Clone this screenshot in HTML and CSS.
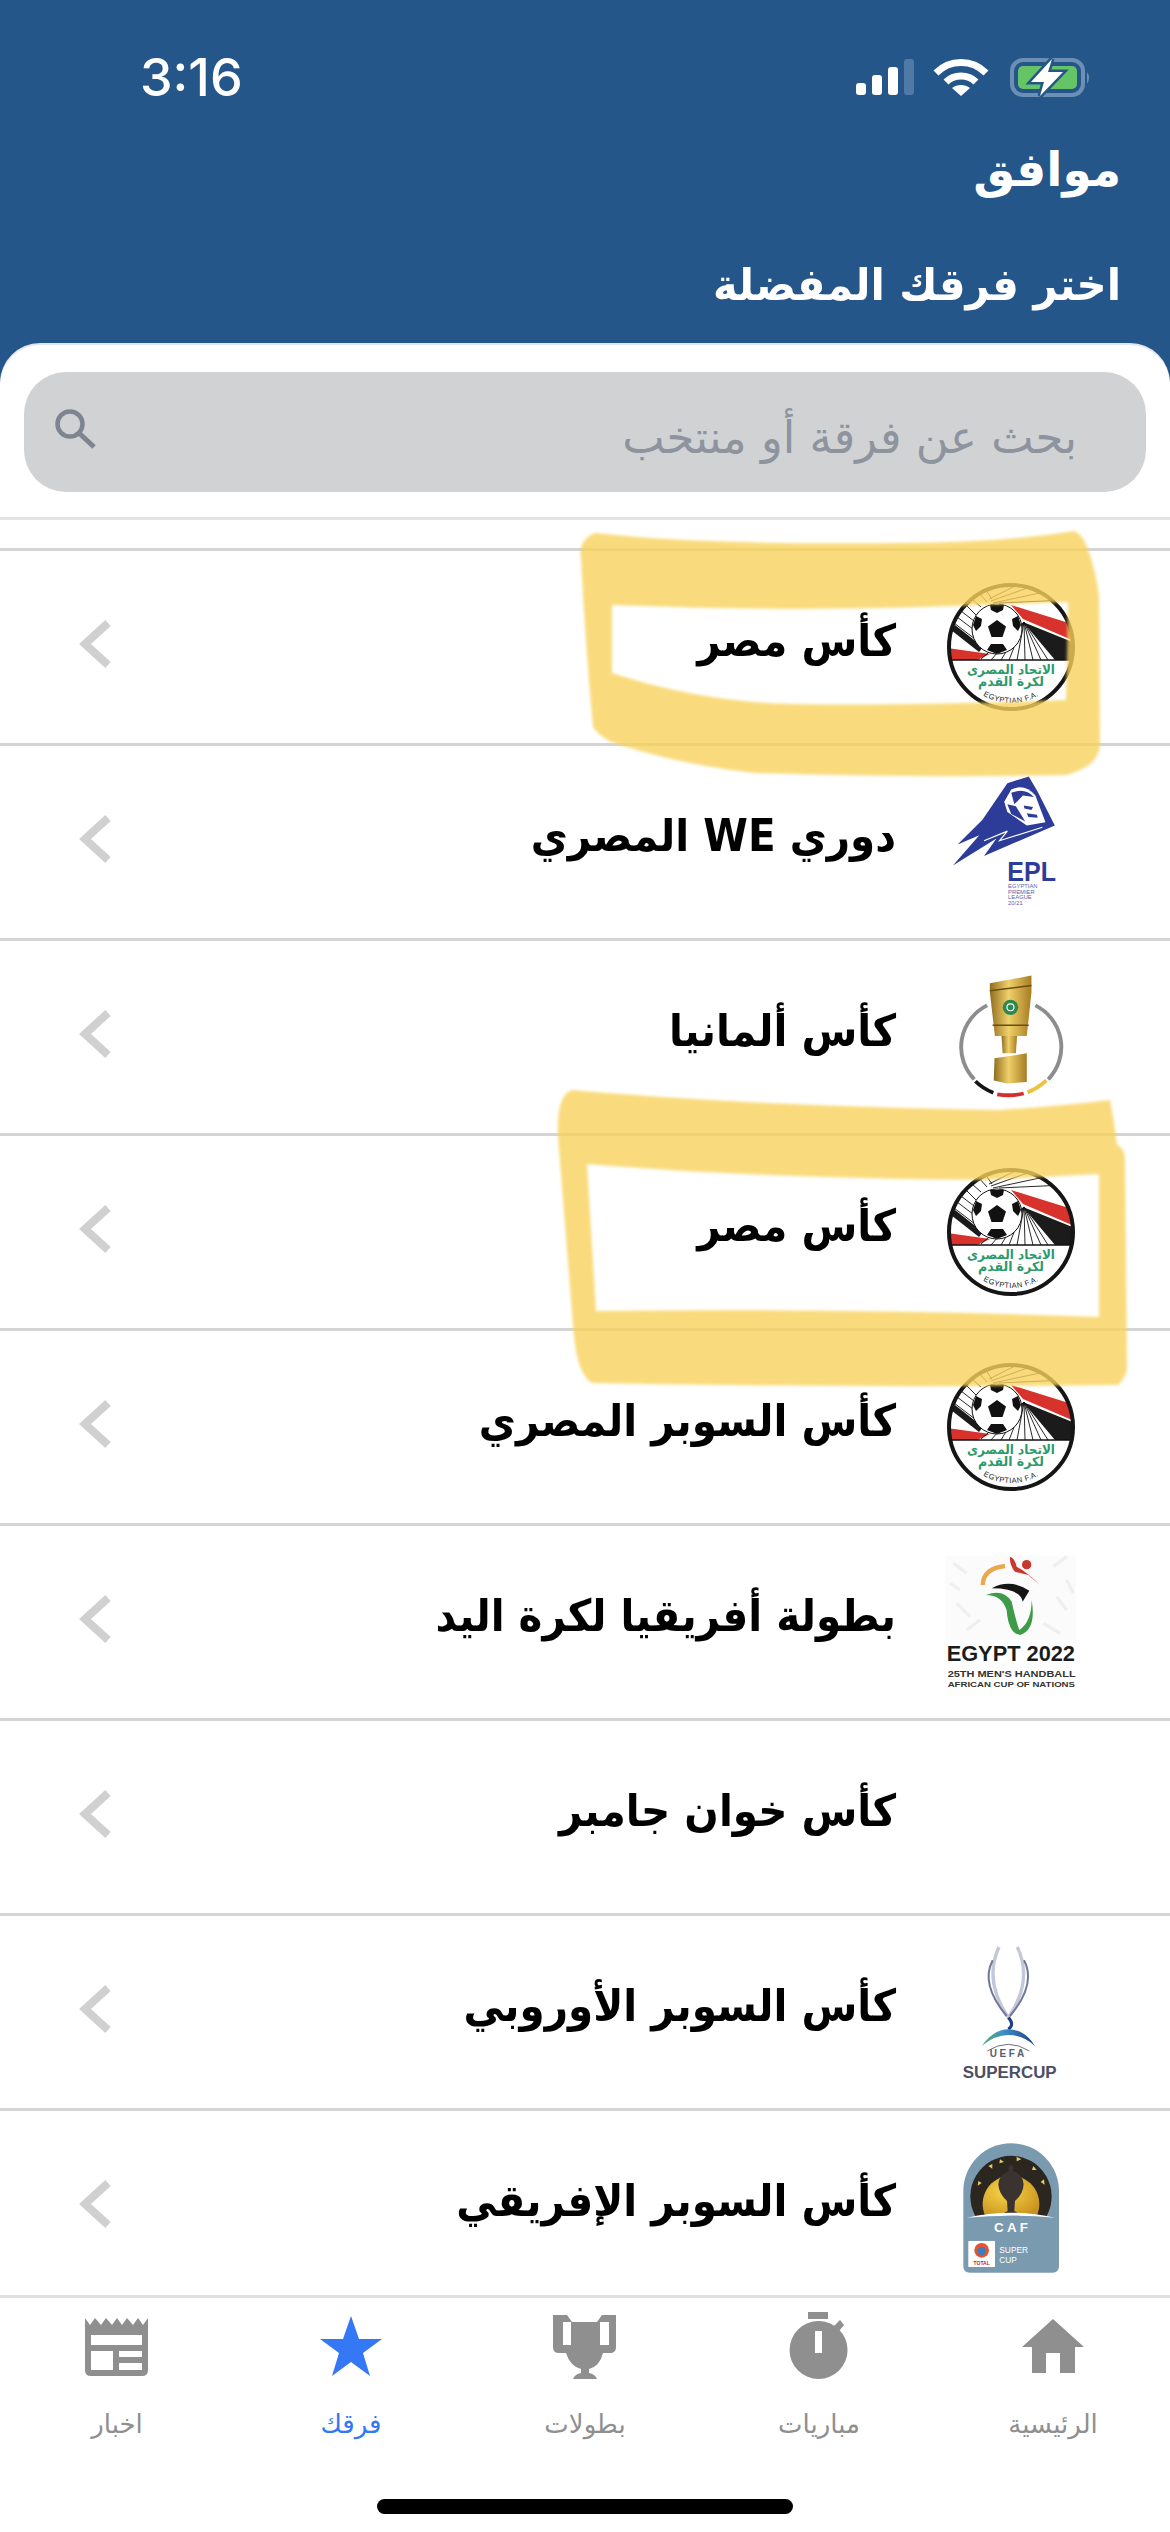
FILE: index.html
```html
<!DOCTYPE html>
<html lang="ar" dir="rtl">
<head>
  <meta charset="UTF-8">
  <title>اختر فرقك المفضلة</title>
  <link rel="stylesheet" href="styles.css">
</head>
<body>
  <!-- Shared drawings: Egyptian FA crest and the row chevron -->
  <svg class="defs" width="0" height="0">
    <defs>
      <clipPath id="crestClip"><circle cx="64" cy="64" r="62"/></clipPath>
      <linearGradient id="gold" x1="0" x2="1" y1="0" y2="0">
        <stop offset="0" stop-color="#8f6c1e"/>
        <stop offset=".45" stop-color="#f0d06a"/>
        <stop offset="1" stop-color="#a67c22"/>
      </linearGradient>
      <linearGradient id="uefaBlue" x1="0" x2="1" y1="0" y2="0">
        <stop offset="0" stop-color="#5fae6e"/>
        <stop offset=".4" stop-color="#3f8fc8"/>
        <stop offset="1" stop-color="#1d3f86"/>
      </linearGradient>
      <radialGradient id="ballGold" cx=".4" cy=".4" r=".7">
        <stop offset="0" stop-color="#f8d648"/>
        <stop offset="1" stop-color="#c9921e"/>
      </radialGradient>
      <symbol id="crest" viewBox="0 0 140 160">
        <g transform="translate(6 16)">
          <circle cx="64" cy="64" r="62" fill="#fff"/>
          <g clip-path="url(#crestClip)">
            <path d="M64 22L125 41V57L76 36Z" fill="#d8322c"/>
            <path d="M76 39L128 60V77H108Z" fill="#1b1b1b"/>
            <path d="M0 65L43 71L30 77H0Z" fill="#d8322c"/>
            <path d="M4 47L8 42L36 64L32 69Z" fill="#1b1b1b"/>
            <path d="M7 40L28 56M10 34L26 46M14 28L27 38M19 22L29 32M25 16L34 24M32 10L40 19M38 6L45 16M42 16L70 2M44 18L86 3M46 20L102 8M52 20L118 17" stroke="#111" stroke-width=".9" fill="none"/>
            <path d="M77 39L34 76M77 39L44 77M77 39L54 77M77 39L62 77M77 39L70 77M77 39L78 77M77 39L86 77M77 39L94 77M77 39L101 77" stroke="#111" stroke-width=".9" fill="none"/>
            <circle cx="50" cy="46" r="25" fill="#fff" stroke="#111" stroke-width="1"/>
            <path d="M50 37L59 43.500L55.500 54H44.500L41 43.500Z" fill="#111"/>
            <path d="M43 22L57 22L56 27L50 30L44 27ZM26 42L29 33L35 36L34 43L29 48ZM74 42L71 33L65 36L66 43L71 48ZM40 67L44 61L56 61L60 67L50 71Z" fill="#111"/>
            <path d="M0 77H128" stroke="#111" stroke-width="1.6"/>
          </g>
          <text class="crest-ar" x="64" y="91" text-anchor="middle" textLength="88" lengthAdjust="spacingAndGlyphs">الاتحاد المصرى</text>
          <text class="crest-ar" x="64" y="103" text-anchor="middle" textLength="66" lengthAdjust="spacingAndGlyphs">لكرة القدم</text>
          <path id="crestArc" d="M20 98.600A56 56 0 0 0 108 98.600" fill="none"/>
          <text class="crest-en" direction="ltr"><textPath href="#crestArc" startOffset="50%" text-anchor="middle">EGYPTIAN F.A.</textPath></text>
          <circle cx="64" cy="64" r="62" fill="none" stroke="#151515" stroke-width="4"/>
        </g>
      </symbol>
      <symbol id="chevron" viewBox="0 0 40 52">
        <path d="M31 5L8 26L31 47" fill="none" stroke="#d0d0d0" stroke-width="8"/>
      </symbol>
    </defs>
  </svg>

  <header class="top">
    <div class="status">
      <span class="time">3:16</span>
      <svg class="status-icons" width="235" height="40" viewBox="0 0 235 40">
        <rect x="0" y="25" width="10" height="12" rx="3" fill="#fff"/>
        <rect x="16" y="17" width="10" height="20" rx="3" fill="#fff"/>
        <rect x="32" y="9" width="10" height="28" rx="3" fill="#fff"/>
        <rect x="48" y="1" width="10" height="36" rx="3" fill="#4f7aa6"/>
        <path d="M80 15C94 1 116 1 130 15" fill="none" stroke="#fff" stroke-width="7"/>
        <path d="M90 24C98 16 112 16 120 24" fill="none" stroke="#fff" stroke-width="7"/>
        <path d="M105 38L96 30C101 26 109 26 114 30Z" fill="#fff"/>
        <rect x="156" y="2" width="71" height="35" rx="11" fill="none" stroke="#6d8fb3" stroke-width="4"/>
        <rect x="162" y="8" width="59" height="23" rx="5" fill="#65c466"/>
        <path d="M231 14Q235 19 231 26Z" fill="#6d8fb3"/>
        <path class="bolt" d="M196 1L175 24H188L184 38L207 14H192Z"/>
      </svg>
    </div>
    <div class="ok">موافق</div>
    <h1 class="title">اختر فرقك المفضلة</h1>
  </header>

  <main class="sheet">
    <div class="search">
      <span class="search-text">بحث عن فرقة أو منتخب</span>
      <svg class="search-icon" width="44" height="44" viewBox="0 0 44 44">
        <circle cx="17" cy="17" r="12.5" fill="none" stroke="#7d8690" stroke-width="4.5"/>
        <path d="M26 26L41 40" stroke="#7d8690" stroke-width="5"/>
      </svg>
    </div>

    <ul class="list">
      <li class="row row-cut"></li>

      <li class="row">
        <svg class="logo"><use href="#crest"/></svg>
        <span class="name">كأس مصر</span>
        <svg class="chevron"><use href="#chevron"/></svg>
      </li>

      <li class="row">
        <svg class="logo" viewBox="0 0 140 160">
          <g transform="translate(-381 -243) scale(.389 .383)">
            <path d="M1150 690L1205 672L1228 712L1272 800L1090 880L1122 834L1010 905L1078 826L1022 850L1086 785Z" fill="#2d3c99"/>
            <path d="M1142 738L1160 706Q1195 690 1222 722L1248 792L1200 800L1150 765Z" fill="#fff"/>
            <path d="M1160 715Q1195 700 1218 726L1190 722L1168 745ZM1150 745L1172 750L1196 790L1160 770ZM1192 748L1216 752L1212 760L1194 756ZM1200 768L1226 772L1228 780L1204 778Z" fill="#2d3c99"/>
            <path d="M1090 840L1150 815L1130 840L1240 805" fill="none" stroke="#fff" stroke-width="3"/>
            <text class="epl-big" x="1150" y="945" direction="ltr" textLength="125" lengthAdjust="spacingAndGlyphs">EPL</text>
            <text class="epl-small" x="1152" y="963" direction="ltr">EGYPTIAN</text>
            <text class="epl-small" x="1152" y="978" direction="ltr">PREMIER</text>
            <text class="epl-small" x="1152" y="993" direction="ltr">LEAGUE</text>
            <text class="epl-small" x="1152" y="1008" direction="ltr">20/21</text>
          </g>
        </svg>
        <span class="name">دوري WE المصري</span>
        <svg class="chevron"><use href="#chevron"/></svg>
      </li>

      <li class="row">
        <svg class="logo" viewBox="0 0 140 160">
          <g transform="translate(-381 -438) scale(.389 .383)">
            <path d="M1098 1270A122 122 0 0 0 1065 1463" fill="none" stroke="#8d8d8d" stroke-width="10"/>
            <path d="M1222 1270A122 122 0 0 1 1255 1463" fill="none" stroke="#8d8d8d" stroke-width="10"/>
            <path d="M1068 1468Q1088 1488 1114 1498" fill="none" stroke="#151515" stroke-width="10"/>
            <path d="M1124 1502Q1160 1508 1192 1500" fill="none" stroke="#d22f2b" stroke-width="10"/>
            <path d="M1202 1497Q1230 1486 1250 1466" fill="none" stroke="#eec23c" stroke-width="10"/>
            <path d="M1105 1212L1212 1192V1235L1200 1350H1118L1105 1235Z" fill="url(#gold)"/>
            <path d="M1105 1232L1212 1218M1112 1322L1205 1322" stroke="#6a4d10" stroke-width="4"/>
            <path d="M1135 1350H1175L1172 1395H1138Z" fill="url(#gold)"/>
            <path d="M1117 1408L1200 1395V1470L1150 1474L1115 1466Z" fill="url(#gold)"/>
            <circle cx="1158" cy="1275" r="20" fill="#2c8a4e"/>
            <circle cx="1158" cy="1275" r="9" fill="none" stroke="#fff" stroke-width="3"/>
          </g>
        </svg>
        <span class="name">كأس ألمانيا</span>
        <svg class="chevron"><use href="#chevron"/></svg>
      </li>

      <li class="row">
        <svg class="logo"><use href="#crest"/></svg>
        <span class="name">كأس مصر</span>
        <svg class="chevron"><use href="#chevron"/></svg>
      </li>

      <li class="row">
        <svg class="logo"><use href="#crest"/></svg>
        <span class="name">كأس السوبر المصري</span>
        <svg class="chevron"><use href="#chevron"/></svg>
      </li>

      <li class="row">
        <svg class="logo" viewBox="0 0 140 160">
          <g transform="translate(-41 -202) scale(.3333)">
            <rect x="135" y="648" width="392" height="252" fill="#fbfbfb"/>
            <path d="M160 670L200 700M460 680L500 650M170 790L210 830M470 770L500 810M200 870L240 840M430 850L480 880M150 730L180 750M500 720L520 760" stroke="#efefef" stroke-width="10"/>
            <path d="M248 735Q250 685 315 678" fill="none" stroke="#e9a94a" stroke-width="13"/>
            <circle cx="380" cy="674" r="14" fill="#c8382f"/>
            <path d="M330 650Q345 655 350 680Q380 695 420 735L385 705L345 695Q328 675 330 650Z" fill="#c8382f"/>
            <path d="M275 745Q330 715 388 752L368 785Q360 745 275 745Z" fill="#151515"/>
            <path d="M258 765Q310 745 335 785Q350 850 358 870Q395 845 395 780Q410 870 360 885Q325 880 320 810Q305 765 258 765Z" fill="#3e9b48"/>
            <text class="eg-big" x="140" y="962" direction="ltr" textLength="385" lengthAdjust="spacingAndGlyphs">EGYPT 2022</text>
            <text class="eg-mid" x="143" y="1010" direction="ltr" textLength="384" lengthAdjust="spacingAndGlyphs">25TH MEN'S HANDBALL</text>
            <text class="eg-low" x="143" y="1042" direction="ltr" textLength="382" lengthAdjust="spacingAndGlyphs">AFRICAN CUP OF NATIONS</text>
          </g>
        </svg>
        <span class="name">بطولة أفريقيا لكرة اليد</span>
        <svg class="chevron"><use href="#chevron"/></svg>
      </li>

      <li class="row">
        <span class="logo logo-empty"></span>
        <span class="name">كأس خوان جامبر</span>
        <svg class="chevron"><use href="#chevron"/></svg>
      </li>

      <li class="row">
        <svg class="logo" viewBox="0 0 140 160">
          <g transform="translate(-41 -11) scale(.3333)">
            <path d="M297 78Q250 180 325 290Q400 180 352 78" fill="none" stroke="#c3c8d8" stroke-width="10"/>
            <path d="M278 118Q240 190 320 285" fill="none" stroke="#6f7898" stroke-width="6"/>
            <path d="M372 118Q410 190 330 285" fill="none" stroke="#6f7898" stroke-width="6"/>
            <path d="M325 290Q345 310 325 325" fill="none" stroke="#1d3f86" stroke-width="9"/>
            <path d="M245 375Q280 325 325 325Q375 325 405 375Q370 342 325 342Q285 342 245 375Z" fill="url(#uefaBlue)"/>
            <path d="M262 390Q325 350 388 390" fill="none" stroke="#6d6f80" stroke-width="3"/>
            <text class="uefa-small" x="325" y="408" text-anchor="middle" direction="ltr">UEFA</text>
            <text class="uefa-big" x="188" y="472" direction="ltr" textLength="282" lengthAdjust="spacingAndGlyphs">SUPERCUP</text>
          </g>
        </svg>
        <span class="name">كأس السوبر الأوروبي</span>
        <svg class="chevron"><use href="#chevron"/></svg>
      </li>

      <li class="row">
        <svg class="logo" viewBox="0 0 140 160">
          <g transform="translate(-41 -206) scale(.3333)">
            <path d="M190 810A143 143 0 0 1 477 810V1035Q477 1055 457 1055H210Q190 1055 190 1035Z" fill="#7a9ab0"/>
            <path d="M226 885A122 122 0 1 1 440 885Z" fill="#2b2620"/>
            <path d="M256 885A85 85 0 1 1 410 885Z" fill="url(#ballGold)"/>
            <path d="M300 715l12 8l-14 4ZM350 707l14 8l-14 6ZM400 735l10 12l-14 0ZM265 735l12-6l0 14ZM235 780l10 6l-12 8ZM432 775l-10 8l12 8Z" fill="#e6c95a"/>
            <path d="M333 730q12 8 6 20q30 10 32 40q-2 30-26 50l-2 30q14 6 20 15h-60q6-9 20-15l-2-30q-24-20-26-50q2-30 32-40q-6-12 6-20Z" fill="#3a3330"/>
            <path d="M200 890Q333 860 465 890Q333 878 200 890Z" fill="#fff"/>
            <text class="caf" x="333" y="932" text-anchor="middle" direction="ltr">C A F</text>
            <rect x="205" y="960" width="80" height="78" fill="#fff"/>
            <circle cx="245" cy="988" r="22" fill="#e2542b"/>
            <circle cx="245" cy="990" r="12" fill="#3b7cc4"/>
            <text class="caf-total" x="245" y="1033" text-anchor="middle" direction="ltr">TOTAL</text>
            <text class="caf-cup" x="298" y="996" direction="ltr">SUPER</text>
            <text class="caf-cup" x="298" y="1026" direction="ltr">CUP</text>
          </g>
        </svg>
        <span class="name">كأس السوبر الإفريقي</span>
        <svg class="chevron"><use href="#chevron"/></svg>
      </li>
    </ul>
  </main>

  <nav class="tabs">
    <div class="tab-row">
      <div class="tab">
        <svg class="tab-icon" viewBox="0 0 70 70"><path d="M35 8L66 36H57V62H42V42H28V62H14V36H4Z"/></svg>
        <span class="tab-label">الرئيسية</span>
      </div>
      <div class="tab">
        <svg class="tab-icon" viewBox="0 0 70 70">
          <rect x="24" y="1" width="20" height="7"/>
          <path d="M34.500 10A29 29 0 1 0 34.600 68A29 29 0 1 0 34.500 10ZM31 20H38V42H31Z" fill-rule="evenodd"/>
          <path d="M50 15L56 9L60 14L55 20Z"/>
        </svg>
        <span class="tab-label">مباريات</span>
      </div>
      <div class="tab">
        <svg class="tab-icon" viewBox="0 0 70 70">
          <path d="M3 4H17L22 11H47L52 4H66V36Q66 42 60 42H53Q50 55 39 58V62Q45 63 47 68H23Q25 63 31 62V58Q20 55 16 42H9Q3 42 3 36ZM13 11V34H21V11ZM50 11V34H59V11Z" fill-rule="evenodd"/>
        </svg>
        <span class="tab-label">بطولات</span>
      </div>
      <div class="tab tab-active">
        <svg class="tab-icon" viewBox="0 0 70 70"><path d="M35 5L43 28H66L47 42L54 65L35 51L16 65L23 42L4 28H27Z"/></svg>
        <span class="tab-label">فرقك</span>
      </div>
      <div class="tab">
        <svg class="tab-icon" viewBox="0 0 70 70">
          <path d="M3 7L8 14L13 7L19 14L24 7L30 14L35 7L40 14L45 7L51 14L56 7L61 14L66 7V59Q66 65 60 65H9Q3 65 3 59ZM9 24V34H60V24ZM9 40V59H31V40ZM37 40V46H60V40ZM37 52V59H60V52Z" fill-rule="evenodd"/>
        </svg>
        <span class="tab-label">اخبار</span>
      </div>
    </div>
    <div class="home-bar"></div>
  </nav>

  <!-- Yellow marker strokes drawn over the screenshot -->
  <svg class="marker" width="1170" height="2532" viewBox="0 0 1170 2532">
    <path fill-rule="evenodd" d="M581 558Q578 540 595 533Q700 545 900 543Q1000 543 1074 531Q1083 535 1087 547Q1096 570 1099 597L1100 746Q1098 758 1089 765Q1078 772 1066 775Q900 778 755 773Q680 765 611 742Q598 735 593 727Q585 640 581 558ZM612 605Q800 612 950 606L1068 602L1066 700Q900 706 793 704Q700 702 612 673Z"/>
    <path fill-rule="evenodd" d="M558 1137Q556 1095 572 1090Q750 1106 1000 1110Q1060 1106 1110 1100Q1114 1120 1117 1145Q1125 1148 1125 1160L1127 1370Q1124 1380 1118 1385Q850 1388 592 1383Q578 1375 574 1337ZM587 1164Q750 1178 982 1180L1099 1174V1317Q850 1308 596 1311Z"/>
  </svg>
</body>
</html>
```

FILE: styles.css
```css
* {
  margin: 0;
  padding: 0;
  box-sizing: border-box;
}
body {
  position: relative;
  width: 1170px;
  height: 2532px;
  display: flex;
  flex-direction: column;
  overflow: hidden;
  background: #25568a;
  font-family: "DejaVu Sans", sans-serif;
}
.defs {
  position: absolute;
}

/* Blue header */
.top {
  height: 345px;
  padding: 58px 49px 0 52px;
  color: #fff;
}
.status {
  direction: ltr;
  display: flex;
  justify-content: space-between;
  align-items: center;
  height: 40px;
  padding: 0 30px 0 88px;
}
.status-icons {
  overflow: visible;
}
.bolt {
  fill: #fff;
  stroke: #25568a;
  stroke-width: 5px;
  paint-order: stroke;
}
.time {
  font-family: Inter, sans-serif;
  font-size: 52px;
  font-weight: 500;
  line-height: 40px;
}
.ok {
  margin-top: 42px;
  font-size: 47px;
  font-weight: 700;
  line-height: 60px;
}
.title {
  margin-top: 55px;
  font-size: 44px;
  font-weight: 700;
  line-height: 60px;
  transform: scaleX(.95);
  transform-origin: right;
}

/* White sheet */
.sheet {
  flex: 1;
  min-height: 0;
  overflow: hidden;
  background: #fff;
  border-radius: 40px 40px 0 0;
  box-shadow: 0 -2px 0 #dfe6f0;
  padding-top: 27px;
}
.search {
  display: flex;
  justify-content: space-between;
  align-items: center;
  height: 120px;
  margin: 0 24px 25px;
  padding: 0 69px 0 29px;
  background: #d0d2d4;
  border-radius: 42px;
}
.search-text {
  margin-top: 10px;
  font-size: 45px;
  color: #8d949e;
}
.search-icon {
  margin-top: -6px;
}

/* League list */
.list {
  list-style: none;
  border-top: 3px solid #e3e3e3;
}
.row {
  display: flex;
  align-items: center;
  height: 195px;
  padding: 0 89px 0 77px;
  border-bottom: 3px solid #d4d4d4;
}
.row-cut {
  height: 31px;
  padding: 0;
}
.logo {
  flex: none;
  width: 140px;
  height: 160px;
  margin-left: 45px;
}
.name {
  flex: 1;
  margin-top: -14px;
  font-size: 44px;
  font-weight: 700;
  color: #000;
  transform: scaleX(.92);
  transform-origin: right;
}
.chevron {
  flex: none;
  width: 40px;
  height: 52px;
  margin-top: -6px;
}

/* Text inside the drawn logos */
.crest-ar {
  font-size: 13px;
  font-weight: 700;
  fill: #2c9a6b;
}
.crest-en {
  font-family: "Liberation Sans", sans-serif;
  font-size: 7.5px;
  letter-spacing: .4px;
  fill: #222;
}
.epl-big {
  font-family: "Liberation Sans", sans-serif;
  font-size: 72px;
  font-weight: 700;
  fill: #2d3c99;
}
.epl-small {
  font-family: "Liberation Sans", sans-serif;
  font-size: 15px;
  fill: #5a64a8;
}
.eg-big {
  font-family: "Liberation Sans", sans-serif;
  font-size: 66px;
  font-weight: 700;
  fill: #1c1c1c;
}
.eg-mid,
.eg-low {
  font-family: "Liberation Sans", sans-serif;
  font-size: 27px;
  font-weight: 700;
  fill: #333;
}
.eg-low {
  font-size: 24px;
}
.uefa-small {
  font-family: "Liberation Sans", sans-serif;
  font-size: 30px;
  font-weight: 700;
  letter-spacing: 8px;
  fill: #5a5c70;
}
.uefa-big {
  font-family: "Liberation Sans", sans-serif;
  font-size: 52px;
  font-weight: 700;
  fill: #4c4e62;
}
.caf {
  font-family: "Liberation Sans", sans-serif;
  font-size: 40px;
  font-weight: 700;
  fill: #fff;
}
.caf-total {
  font-family: "Liberation Sans", sans-serif;
  font-size: 15px;
  font-weight: 700;
  fill: #c8202c;
}
.caf-cup {
  font-family: "Liberation Sans", sans-serif;
  font-size: 25px;
  fill: #fff;
}

/* Bottom tabs */
.tabs {
  flex: none;
  height: 237px;
  background: #fff;
  border-top: 3px solid #e0e0e0;
  display: flex;
  flex-direction: column;
  align-items: center;
}
.tab-row {
  display: flex;
  width: 100%;
}
.tab {
  flex: 1;
  display: flex;
  flex-direction: column;
  align-items: center;
  padding-top: 13px;
  color: #8f8f8f;
}
.tab-icon {
  width: 70px;
  height: 70px;
  fill: #8f8f8f;
}
.tab-label {
  margin-top: 23px;
  font-size: 26px;
  line-height: 40px;
}
.tab-active {
  color: #3478f6;
}
.tab-active .tab-icon {
  fill: #3478f6;
}
.home-bar {
  width: 416px;
  height: 15px;
  margin-top: 55px;
  background: #000;
  border-radius: 8px;
}

/* Marker overlay */
.marker {
  position: absolute;
  top: 0;
  left: 0;
  pointer-events: none;
  fill: #f8d25c;
  opacity: .8;
  filter: blur(1.5px);
}
```
